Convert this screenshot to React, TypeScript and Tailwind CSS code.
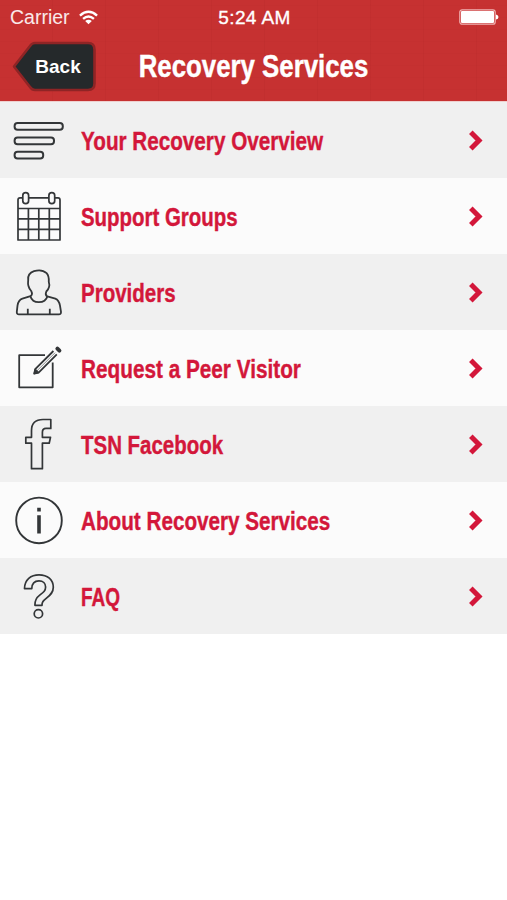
import type { ReactNode } from "react";

interface MenuItem {
  label: string;
  icon: ReactNode;
  labelClass: string;
}

const ITEMS: MenuItem[] = [
  {
    label: "Your Recovery Overview",
    labelClass: "scale-x-[0.827]",
    icon: (
      <g strokeWidth="2">
        <rect x="14.6" y="21" width="48.2" height="6.8" rx="3" />
        <rect x="14.6" y="35.4" width="39.4" height="6.8" rx="3" />
        <rect x="14.6" y="49.8" width="28.6" height="6.8" rx="3" />
      </g>
    ),
  },
  {
    label: "Support Groups",
    labelClass: "scale-x-[0.817]",
    icon: (
      <g strokeWidth="1.7">
        <path d="M22.8 19.8H20Q18 19.8 18 22V62H60V22Q60 19.8 58 19.8H54.8M28.6 19.8H48.8" />
        <rect x="22.8" y="14.6" width="5.8" height="11" rx="2.9" />
        <rect x="48.9" y="14.6" width="5.8" height="11" rx="2.9" />
        <path d="M18 30.5H60M18 40.8H60M18 51.4H60M28.4 30.5V62M38.8 30.5V62M49.3 30.5V62" />
      </g>
    ),
  },
  {
    label: "Providers",
    labelClass: "scale-x-[0.82]",
    icon: (
      <g strokeWidth="1.8">
        <path d="M30.5 42.2C32.5 41 32.2 39 31.2 37C29.5 35.2 28.8 33.5 28.4 31.8C27.6 29.6 28.2 28 28.2 26C27.6 20.5 31 18.2 34 17.2C39 15.6 44 16.8 46.6 19.2C49.2 22 49 25 48.8 28C49.8 31 48.8 35 46.3 37.5C45.4 39.5 45.6 41.3 47.3 42.4L55.3 44.6C58.5 45.8 59.4 48.5 60 51.6L61 57.8Q61.2 60.4 58.8 60.4H19Q16.6 60.4 16.8 57.8L17.5 51.6C18 48.3 19.2 45.8 22.4 44.7Z" />
        <path d="M30.5 42.4Q32 48 38.8 48.1Q45.8 48 47.3 42.4M27.8 54.7V60M49.8 54.7V60" />
      </g>
    ),
  },
  {
    label: "Request a Peer Visitor",
    labelClass: "scale-x-[0.83]",
    icon: (
      <g strokeWidth="1.8">
        <path d="M45 25.2H19.2V57.3H52.7V32.6" />
        <path d="M53.4 21L35.2 39.2L34.2 43.6L38.6 42.6L56.8 24.4" />
        <path d="M36.4 41.4L55.1 22.7" stroke="#8b8d8e" strokeWidth="1" />
        <path d="M34 43.8L35.2 38.8L39 42.6Z" fill="#333638" strokeWidth="1" />
        <path d="M57.4 18.6L59.4 20.6" strokeWidth="4" strokeLinecap="round" strokeLinejoin="round" />
      </g>
    ),
  },
  {
    label: "TSN Facebook",
    labelClass: "scale-x-[0.818]",
    icon: (
      <path
        strokeWidth="1.7"
        d="M31.5 62.7H42.4V37.2H49.2L50.5 31.3H42.4V26.2Q42.4 22.4 46 22.4H50.8V13.5H43Q31.5 13.5 31.5 24.7V31.3H25.8V37.2H31.5Z"
      />
    ),
  },
  {
    label: "About Recovery Services",
    labelClass: "scale-x-[0.827]",
    icon: (
      <g>
        <circle cx="39" cy="38.4" r="22.8" strokeWidth="1.9" />
        <path d="M39 33.2V51.4M39 25.8V29.4" strokeWidth="3.6" strokeLinecap="butt" />
      </g>
    ),
  },
  {
    label: "FAQ",
    labelClass: "scale-x-[0.76]",
    icon: (
      <g strokeWidth="1.7">
        <path d="M24.5 30.6C24.5 21.5 31 16.8 39 16.8C47.5 16.8 53.3 21.7 53.3 29.3C53.3 34.4 50.5 37 46.5 40.2C42.7 43.2 42 44.2 42 47.3H34.9C34.7 42.5 36 39.9 40 36.9C43.8 34 45.6 32.6 45.6 29.1C45.6 25.5 43 22.8 39 22.8C34.5 22.8 31.9 25.6 31.8 30.6Z" />
        <circle cx="38.4" cy="55.8" r="4.2" />
      </g>
    ),
  },
];

function StatusBar() {
  return (
    <div className="grid h-[34px] grid-cols-3 items-center pr-[8px] pl-[10px] leading-none text-white">
      <div className="flex items-center gap-[9px]">
        <span className="pt-px text-[19.5px] text-white/90">Carrier</span>
        <svg width="19" height="15" viewBox="0 0 20 15" fill="none" stroke="white" strokeWidth="2.5">
          <path d="M1 5.5Q10 -2.6 19 5.5M4.3 8.9Q10 4 15.7 8.9" />
          <path d="M6.5 11.2Q10 8.3 13.5 11.2L10 14.7Z" fill="white" stroke="none" />
        </svg>
      </div>
      <span className="text-center text-[19px] tracking-[0.4px] whitespace-nowrap [-webkit-text-stroke:0.35px_white]">
        5:24 AM
      </span>
      <svg className="justify-self-end" width="40" height="16" viewBox="0 0 40 16">
        <rect x="0.8" y="0.8" width="35.4" height="14.4" rx="2.3" fill="none" stroke="#f0b3b3" strokeWidth="1.2" />
        <rect x="2" y="2" width="33" height="12" rx="1" fill="white" />
        <path d="M37 5.5Q39.5 6 39.5 8T37 10.5Z" fill="white" />
      </svg>
    </div>
  );
}

function BackButton() {
  return (
    <button className="relative ml-[11px] h-[54px] w-[87px] text-white">
      <svg className="absolute inset-0" width="87" height="54" viewBox="0 0 87 54">
        <path
          d="M3 27.5L19 7Q21 4 24 4H77Q83.5 4 83.5 10.5V44.5Q83.5 51 77 51H24Q21 51 19 48Z"
          fill="#25292b"
          stroke="#8f2425"
          strokeWidth="2.6"
          strokeLinejoin="round"
        />
      </svg>
      <span className="relative top-[2px] pl-[7px] text-[19px] leading-none font-bold">Back</span>
    </button>
  );
}

function MenuRow({ item }: { item: MenuItem }) {
  return (
    <li className="flex h-[76px] items-center odd:bg-[#f0f0f0] even:bg-[#fbfbfb]">
      <svg
        className="shrink-0"
        width="81"
        height="76"
        viewBox="0 0 81 76"
        fill="none"
        stroke="#333638"
        strokeLinejoin="round"
      >
        {item.icon}
      </svg>
      <span
        className={`origin-left pt-[2px] text-[25px] leading-none font-bold whitespace-nowrap text-[#d3173a] [-webkit-text-stroke:0.4px_#d3173a] ${item.labelClass}`}
      >
        {item.label}
      </span>
      <svg className="mr-[23px] ml-auto shrink-0" width="16" height="24" viewBox="0 0 16 24" fill="none">
        <path d="M2.8 4.3L11 12.5L2.8 20.7" stroke="#d3173a" strokeWidth="5" />
      </svg>
    </li>
  );
}

export default function App() {
  return (
    <main className="h-[900px] w-[507px] overflow-hidden bg-white font-['Liberation_Sans',Arial,sans-serif]">
      <header className="h-[102px] border-b border-[#efd0cf] bg-[#c63131] bg-[repeating-linear-gradient(90deg,transparent_0_52px,rgba(140,20,20,0.07)_52px_53px),repeating-linear-gradient(0deg,transparent_0_11px,rgba(140,20,20,0.03)_11px_12px)]">
        <StatusBar />
        <div className="grid h-[64px] grid-cols-[98px_1fr_98px] items-center">
          <BackButton />
          <h1 className="scale-x-[0.833] text-center text-[31px] leading-none font-bold whitespace-nowrap text-white [-webkit-text-stroke:0.4px_white]">
            Recovery Services
          </h1>
        </div>
      </header>
      <ul>
        {ITEMS.map((item) => (
          <MenuRow key={item.label} item={item} />
        ))}
      </ul>
    </main>
  );
}
